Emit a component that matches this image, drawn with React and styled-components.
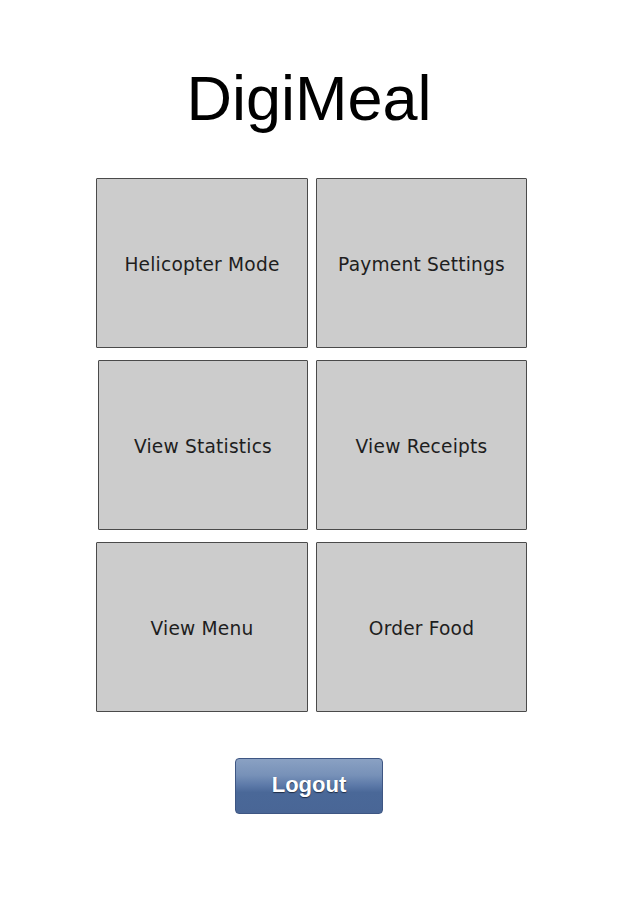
import React from "react";
import styled, { createGlobalStyle } from "styled-components";

const GlobalStyle = createGlobalStyle`
  html, body {
    margin: 0;
    padding: 0;
    background: #ffffff;
  }
`;

const Page = styled.div`
  width: 620px;
  height: 900px;
  display: flex;
  flex-direction: column;
  align-items: flex-start;
  padding-top: 67px;
  box-sizing: border-box;
`;

const Title = styled.h1`
  align-self: stretch;
  margin: 0;
  text-align: center;
  font-family: "Liberation Sans", Arial, sans-serif;
  font-weight: 400;
  font-size: 63px;
  line-height: 1;
  color: #000;
  padding-right: 2px;
`;

const Grid = styled.div`
  display: grid;
  grid-template-columns: 212px 211px;
  grid-auto-rows: 170px;
  column-gap: 8px;
  row-gap: 12px;
  margin: 48px 0 0 96px;
`;

const Tile = styled.button`
  box-sizing: border-box;
  margin: 0 0 0 ${({ nudge }) => nudge || 0}px;
  width: calc(100% - ${({ nudge }) => nudge || 0}px);
  height: 100%;
  background: #cccccc;
  border: 1px solid #4a4a4a;
  border-radius: 1px;
  display: flex;
  align-items: center;
  justify-content: center;
  padding: 3px 0 0;
  font-family: "DejaVu Sans", "Open Sans", sans-serif;
  font-size: 18.6px;
  letter-spacing: 0.2px;
  color: #1e1e1e;
  cursor: pointer;
`;

const LogoutButton = styled.button`
  align-self: center;
  margin: 46px 0 0 -2px;
  width: 148px;
  height: 56px;
  box-sizing: border-box;
  border: 1px solid #3e5683;
  border-radius: 4px;
  background: linear-gradient(
    to bottom,
    #8aa1c3 0%,
    #7791b8 30%,
    #5d7aa9 48%,
    #4a6898 62%,
    #496696 100%
  );
  color: #ffffff;
  font-family: "Liberation Sans", Arial, sans-serif;
  font-weight: 700;
  font-size: 22px;
  text-shadow: 0 1px 1px rgba(20, 30, 50, 0.8);
  cursor: pointer;
  padding: 0 0 2px;
`;

const tiles = [
  { label: "Helicopter Mode" },
  { label: "Payment Settings" },
  { label: "View Statistics", nudge: 2 },
  { label: "View Receipts" },
  { label: "View Menu" },
  { label: "Order Food" },
];

export default function App() {
  return (
    <>
      <GlobalStyle />
      <Page>
        <Title>DigiMeal</Title>
        <Grid>
          {tiles.map((t) => (
            <Tile key={t.label} nudge={t.nudge}>
              {t.label}
            </Tile>
          ))}
        </Grid>
        <LogoutButton>Logout</LogoutButton>
      </Page>
    </>
  );
}
